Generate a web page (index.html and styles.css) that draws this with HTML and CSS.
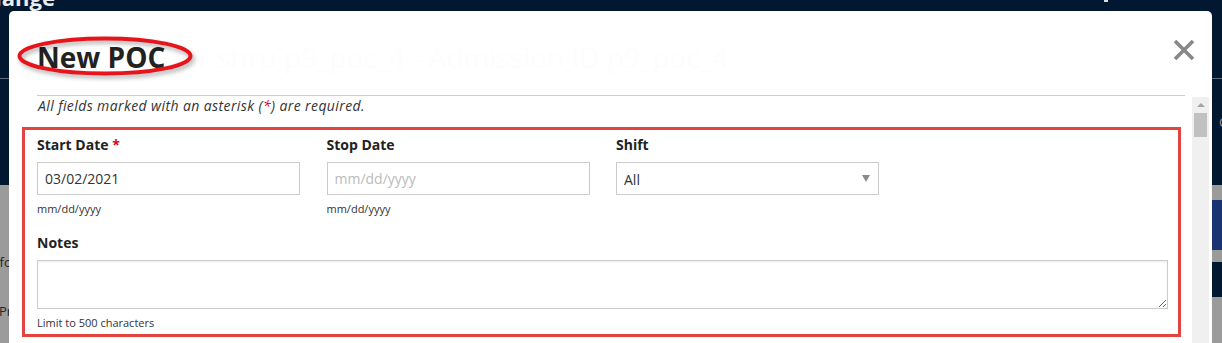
FILE: index.html
```html
<!DOCTYPE html>
<html lang="en">
<head>
    <meta charset="UTF-8">
    <meta name="viewport" content="width=device-width, initial-scale=1.0">
    <title>New POC</title>
    <link rel="stylesheet" href="styles.css">
</head>
<body>
    <div class="page">
        <header class="app-header">
            <span class="brand">Exchange</span>
            <span class="user-mark"></span>
        </header>
        <nav class="subnav">
            <span class="subnav-link">Contacts</span>
        </nav>
        <main class="content">
            <div class="content-side">
                <p class="side-info">Info</p>
                <p class="side-profile">Profile</p>
            </div>
            <div class="content-right">
                <div class="strip-gap"></div>
                <div class="strip-blue"></div>
                <div class="strip-gap small"></div>
                <div class="strip-navy"></div>
            </div>
        </main>
    </div>

    <div class="modal">
        <div class="modal-header">
            <h2 class="modal-title">New POC<span class="title-rest"> for shru p9_poc_4 - Admission ID p9_poc_4</span></h2>
            <svg class="title-circle" width="178" height="44" viewBox="0 0 178 44">
                <ellipse cx="88" cy="20" rx="85.5" ry="17.5" fill="none" stroke="#e8141b" stroke-width="4"/>
            </svg>
            <button class="close" type="button" aria-label="Close">
                <svg width="22" height="22" viewBox="0 0 22 22">
                    <path d="M2 2 L20 20 M20 2 L2 20" stroke="#878787" stroke-width="3.6" fill="none"/>
                </svg>
            </button>
        </div>
        <div class="modal-body">
            <div class="form-area">
                <p class="required-note">All fields marked with an asterisk (<span class="req">*</span>) are required.</p>
                <form class="fields" id="pocForm">
                    <div class="row">
                        <div class="field">
                            <label for="startDate">Start Date <span class="req">*</span></label>
                            <input type="text" id="startDate" value="03/02/2021">
                            <small>mm/dd/yyyy</small>
                        </div>
                        <div class="field">
                            <label for="stopDate">Stop Date</label>
                            <input type="text" id="stopDate" placeholder="mm/dd/yyyy">
                            <small>mm/dd/yyyy</small>
                        </div>
                        <div class="field">
                            <label for="shift">Shift</label>
                            <div class="select-wrap">
                                <select id="shift">
                                    <option>All</option>
                                    <option>Day</option>
                                    <option>Evening</option>
                                    <option>Night</option>
                                </select>
                            </div>
                        </div>
                    </div>
                    <div class="field">
                        <label for="notes">Notes</label>
                        <textarea id="notes" maxlength="500"></textarea>
                        <small>Limit to 500 characters</small>
                    </div>
                </form>
            </div>
            <div class="scrollbar">
                <div class="scroll-up"></div>
                <div class="scroll-thumb"></div>
            </div>
        </div>
    </div>
</body>
</html>
```

FILE: styles.css
```css
body {
    margin: 0;
    padding: 0;
    font-family: "Open Sans", Arial, sans-serif;
    background-color: #9b9b9b;
    overflow: hidden;
}
.page {
    height: 100vh;
    display: flex;
    flex-direction: column;
}
.app-header {
    height: 78px;
    background-color: #021831;
    border-bottom: 1px solid #5f6b7a;
    display: flex;
    justify-content: space-between;
    overflow: hidden;
}
.brand {
    color: #e9edf2;
    font-weight: 700;
    font-size: 22px;
    line-height: 22px;
    margin-top: -14px;
    margin-left: -49px;
}
.user-mark {
    width: 4px;
    height: 2px;
    background: #d8dde4;
    margin-right: 114px;
}
.subnav {
    height: 106px;
    background-color: #021831;
    display: flex;
    justify-content: flex-end;
    overflow: hidden;
}
.subnav-link {
    color: #8e97a3;
    font-size: 13px;
    margin-top: 34px;
    margin-right: -50px;
}
.content {
    flex: 1;
    display: flex;
    justify-content: space-between;
}
.content-side {
    overflow: hidden;
    width: 9px;
}
.content-side p {
    margin: 0;
    font-size: 13px;
    color: #222;
    white-space: nowrap;
}
.side-info {
    margin-top: 68px !important;
    margin-left: -12px !important;
}
.side-profile {
    margin-top: 31px !important;
    margin-left: -1px !important;
}
.content-right {
    width: 10px;
}
.strip-gap {
    height: 15px;
}
.strip-gap.small {
    height: 12px;
}
.strip-blue {
    height: 50px;
    background-color: #1a3371;
}
.strip-navy {
    height: 35px;
    background-color: #021831;
}

.modal {
    position: fixed;
    left: 9px;
    top: 11px;
    width: 1203px;
    background: white;
    border-radius: 5px 5px 0 0;
}
.modal-header {
    position: relative;
    height: 85px;
    box-sizing: border-box;
    margin: 0 27px 0 28px;
    padding-top: 7px;
    border-bottom: 1px solid #cccccc;
    display: flex;
    align-items: center;
}
.modal-title {
    margin: 0;
    font-size: 28px;
    font-weight: 700;
    color: #222;
    white-space: nowrap;
    overflow: hidden;
}
.title-rest {
    color: #fdfdfd;
    font-weight: 400;
}
.title-circle {
    position: absolute;
    left: -20px;
    top: 25px;
    filter: drop-shadow(2px 3px 2px rgba(0, 0, 0, 0.3));
}
.close {
    position: absolute;
    right: -10px;
    top: 28px;
    padding: 0;
    border: none;
    background: none;
    cursor: pointer;
    line-height: 0;
}
.modal-body {
    display: flex;
    height: 300px;
}
.form-area {
    flex: 1;
    padding: 0 11px 0 13px;
}
.required-note {
    margin: 1px 0 12px 16px;
    font-size: 14px;
    letter-spacing: 0.4px;
    line-height: 18px;
    font-style: italic;
    color: #333;
}
.req {
    color: #d0021b;
}
.fields {
    border: 3px solid #e4443f;
    padding: 5px 10px 4px 12px;
    margin: 0;
}
.row {
    display: grid;
    grid-template-columns: repeat(3, 263px);
    column-gap: 26.5px;
    margin-bottom: 17px;
}
.field {
    display: flex;
    flex-direction: column;
}
label {
    font-size: 14px;
    font-weight: 700;
    line-height: 20px;
    color: #222;
    margin-bottom: 7px;
}
input, select, textarea {
    font-family: "Open Sans", Arial, sans-serif;
    font-size: 14px;
    color: #333;
    border: 1px solid #cccccc;
    border-radius: 0;
    box-sizing: border-box;
    margin: 0;
}
input {
    height: 33px;
    padding: 0 7px;
}
input::placeholder {
    color: #bbbbbb;
}
.select-wrap {
    position: relative;
}
select {
    width: 100%;
    height: 33px;
    padding: 2px 7px 0;
    background: white;
    appearance: none;
}
.select-wrap::after {
    content: "";
    position: absolute;
    right: 9px;
    top: 13px;
    border-left: 4px solid transparent;
    border-right: 4px solid transparent;
    border-top: 7px solid #8a8a8a;
}
textarea {
    height: 49px;
    resize: vertical;
    box-shadow: inset 0 1px 2px rgba(0, 0, 0, 0.08);
}
small {
    font-size: 11px;
    line-height: 15px;
    color: #333;
    margin-top: 6px;
}
.scrollbar {
    width: 17px;
    margin: 1px 3px 0 0;
    background-color: #f0f0f0;
}
.scroll-up {
    height: 16px;
    display: flex;
    justify-content: center;
    align-items: center;
}
.scroll-up::before {
    content: "";
    border-left: 4px solid transparent;
    border-right: 4px solid transparent;
    border-bottom: 4px solid #a3a3a3;
}
.scroll-thumb {
    height: 24px;
    margin: 0 2px;
    background-color: #c1c1c1;
}
```
